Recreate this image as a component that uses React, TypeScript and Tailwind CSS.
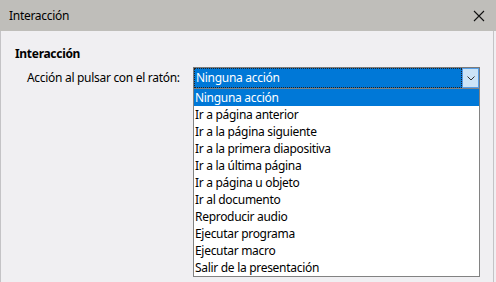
import React from "react";

const items = [
  "Ninguna acción",
  "Ir a página anterior",
  "Ir a la página siguiente",
  "Ir a la primera diapositiva",
  "Ir a la última página",
  "Ir a página u objeto",
  "Ir al documento",
  "Reproducir audio",
  "Ejecutar programa",
  "Ejecutar macro",
  "Salir de la presentación",
];

export default function App() {
  return (
    <div
      className="w-[496px] h-[282px] overflow-hidden bg-[#f0eff2] text-[12px] tracking-[-0.3px] text-black flex flex-col"
      style={{ fontFamily: '"Noto Sans", "Open Sans", sans-serif' }}
    >
      <div className="h-[31px] bg-[#bfbeba] flex items-center justify-between pl-[9px] pr-[10px] shrink-0">
        <span>Interacción</span>
        <svg width="12" height="12" viewBox="0 0 12 12" className="mr-[1px]">
          <path d="M1 1 L11 11 M11 1 L1 11" stroke="#111" strokeWidth="1.1" fill="none" />
        </svg>
      </div>
      <div className="flex-1 border-l border-r border-[#c4c3c6] mr-[2px] relative">
        <div className="pl-[14px] pt-[14px] font-bold leading-[17px]">Interacción</div>
        <div className="flex items-start mt-[5px] relative">
          <span className="pl-[26px] w-[192px] leading-[20px] pt-[1px]">Acción al pulsar con el ratón:</span>
          <div className="relative w-[287px]">
            <div className="h-[21px] border border-[#7a7a7a] border-b-0 flex bg-white">
              <div className="flex-1 bg-[#0078d7] text-white border border-dotted border-[#222] flex items-center pl-[1px] leading-none">
                Ninguna acción
              </div>
              <div className="w-[17px] bg-[#cce4f7] border border-[#569de5] flex items-center justify-center">
                <svg width="8" height="5" viewBox="0 0 8 5">
                  <path d="M0.5 0.5 L4 4 L7.5 0.5" stroke="#333" strokeWidth="1" fill="none" />
                </svg>
              </div>
            </div>
            <div className="absolute left-0 top-[21px] w-[287px] bg-white border border-[#828282] flex flex-col">
              {items.map((t, i) => (
                <div
                  key={t}
                  className={
                    "h-[17px] leading-[17px] pl-[1px] " +
                    (i === 0 ? "bg-[#0078d7] text-white" : "")
                  }
                >
                  {t}
                </div>
              ))}
            </div>
          </div>
        </div>
      </div>
    </div>
  );
}
